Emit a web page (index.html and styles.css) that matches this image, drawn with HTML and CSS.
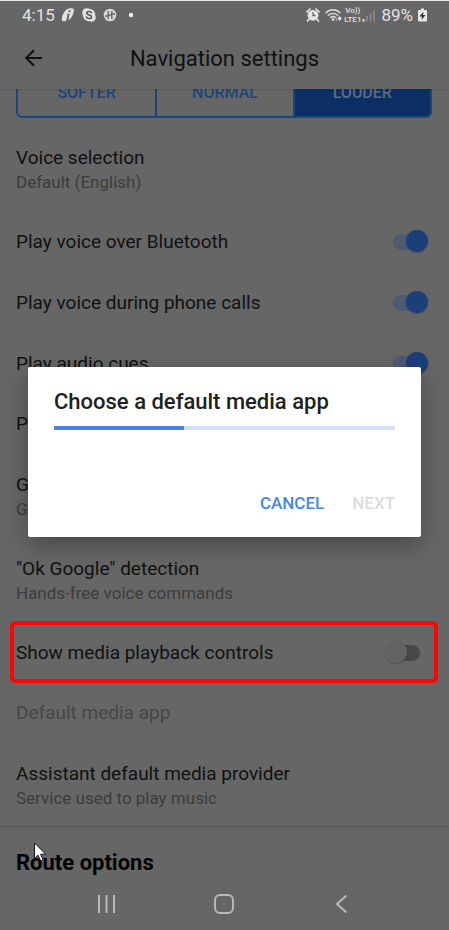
FILE: index.html
```html
<!DOCTYPE html>
<html lang="en">
<head>
<meta charset="utf-8">
<meta name="viewport" content="width=device-width, initial-scale=1">
<title>Navigation settings</title>
<link rel="stylesheet" href="styles.css">
</head>
<body>
<div class="phone">
  <div class="status">
    <span class="status-text">4:15</span>
    <svg class="glyph note" width="14" height="14" viewBox="0 0 14 14"><path d="M7 .8C9 0 12 0 12.800 1.200C13.400 3 12 7 10 10L7.500 12.500L8.600 5.500L5.500 6L6.500 7L5 13C3 13.800.8 13 .8 11.500C.8 7.500 3.500 2.500 7 .8Z" fill="#e2e2e2"/><circle cx="8.600" cy="3.200" r="1.100" fill="#666"/></svg>
    <svg class="glyph" width="14" height="14" viewBox="0 0 14 14"><circle cx="4.500" cy="4.500" r="4.300" fill="#e2e2e2"/><circle cx="9.500" cy="9.500" r="4.300" fill="#e2e2e2"/><circle cx="7" cy="7" r="6.200" fill="#e2e2e2"/><path d="M9.500 4.800C8.800 3 4.700 3 4.700 5.200C4.700 7.500 9.600 6.500 9.600 8.900C9.600 11.200 5 11.100 4.400 9" fill="none" stroke="#555" stroke-width="1.500" stroke-linecap="round"/></svg>
    <svg class="glyph" width="14" height="14" viewBox="0 0 14 14"><circle cx="7" cy="7" r="6.300" fill="#d8d8d8"/><path d="M5.200 3V11M8.800 3V11M2 8H5.200L8.800 6H12" fill="none" stroke="#666" stroke-width="1.400"/></svg>
    <svg class="glyph dot" width="6" height="6" viewBox="0 0 6 6"><circle cx="3" cy="3" r="2.200" fill="#eee"/></svg>
    <span class="spacer"></span>
    <svg width="14" height="14" viewBox="0 0 14 14"><path d="M1 3.800L4 1M13 3.800L10 1M3 11L1.600 13M11 11L12.400 13" stroke="#e4e4e4" stroke-width="1.700" stroke-linecap="round"/><circle cx="7" cy="7.300" r="5.400" fill="#e4e4e4"/><path d="M7 4.300V7.500H9.500" fill="none" stroke="#666" stroke-width="1.300"/></svg>
    <svg class="wifi" width="17" height="14" viewBox="0 0 17 14"><path d="M1 4.800C5 .8 11 .8 15 4.800M3.300 7.300C6 4.700 10 4.700 12.700 7.300M5.600 9.600C7 8.300 9 8.300 10.400 9.600" fill="none" stroke="#dedede" stroke-width="1.400" stroke-linecap="round"/><circle cx="8" cy="11.600" r="1.300" fill="#dedede"/><path d="M11.800 9V13L10.300 11.500" stroke="#aaa" fill="none"/><path d="M14.500 8L16.800 10.500L14.500 13L12.800 10.500Z" fill="#e4e4e4"/></svg>
    <span class="lte"><span>Vo))</span><span>LTE1</span></span>
    <svg class="signal" width="13" height="13" viewBox="0 0 13 13"><path d="M1.500 10V12.500" stroke="#e4e4e4" stroke-width="2"/><path d="M5 7V12.500M8.500 4V12.500M12 1V12.500" stroke="#8d8d8d" stroke-width="1.600"/></svg>
    <span class="status-text percent">89%</span>
    <svg class="battery" width="9" height="14" viewBox="0 0 9 14"><path d="M3 .5H6V2H8Q9 2 9 3V12.500Q9 13.500 8 13.500H1Q0 13.500 0 12.500V3Q0 2 1 2H3Z" fill="#e8e8e8"/><path d="M5.500 3.500L1.500 8.500H4L3.500 12L7.500 7H5Z" fill="#333"/></svg>
  </div>
  <header class="appbar">
    <button class="back" aria-label="Back"><svg width="20" height="20" viewBox="0 0 20 20"><path d="M18 10H2.500M10 2.200L2.200 10L10 17.800" fill="none" stroke="#111" stroke-width="2"/></svg></button>
    <h1>Navigation settings</h1>
  </header>
  <main>
    <div class="segment-view">
      <div class="segments">
        <button>SOFTER</button><button>NORMAL</button><button class="selected">LOUDER</button>
      </div>
    </div>
    <section class="row"><h2>Voice selection</h2><p>Default (English)</p></section>
    <label class="row toggle"><span>Play voice over Bluetooth</span><input type="checkbox" checked></label>
    <label class="row toggle"><span>Play voice during phone calls</span><input type="checkbox" checked></label>
    <label class="row toggle"><span>Play audio cues</span><input type="checkbox" checked></label>
    <section class="row"><h2>P</h2></section>
    <section class="row"><h2>G</h2><p>G</p></section>
    <section class="row"><h2>"Ok Google" detection</h2><p>Hands-free voice commands</p></section>
    <label class="row toggle marked"><span>Show media playback controls</span><input type="checkbox"></label>
    <section class="row disabled"><h2>Default media app</h2></section>
    <section class="row group-end"><h2>Assistant default media provider</h2><p>Service used to play music</p></section>
    <div class="route"><h2>Route options</h2>
      <svg class="pointer" width="13" height="20" viewBox="0 0 13 20"><path d="M.5 1V16.500L4 13.200L6.700 19L9.200 17.900L6.600 12.200H11.700Z" fill="#fff" stroke="#111827"/></svg>
    </div>
  </main>
  <nav class="navbar">
    <button aria-label="Recent apps"><svg width="20" height="20" viewBox="0 0 20 20"><path d="M2 1V19M9.500 1V19M17 1V19" stroke="#b8b8b8" stroke-width="2"/></svg></button>
    <button aria-label="Home"><svg width="20" height="20" viewBox="0 0 20 20"><rect x="1" y="1" width="18" height="18" rx="5" fill="none" stroke="#b8b8b8" stroke-width="2"/></svg></button>
    <button aria-label="Back"><svg width="20" height="20" viewBox="0 0 20 20"><path d="M14.500 1.500L5 10L14.500 18.500" fill="none" stroke="#b8b8b8" stroke-width="2"/></svg></button>
  </nav>
  <div class="overlay">
    <div class="dialog" role="dialog" aria-labelledby="dialog-title">
      <h2 id="dialog-title">Choose a default media app</h2>
      <progress value="38" max="100" aria-labelledby="dialog-title"></progress>
      <div class="actions"><button>CANCEL</button><button disabled>NEXT</button></div>
    </div>
  </div>
</div>
</body>
</html>
```
FILE: styles.css
```css
* { box-sizing: border-box; }
body { margin: 0; background: #666; color: #111; font-family: Roboto, "Liberation Sans", sans-serif; }
h1, h2, p { margin: 0; font-weight: 400; }
button { padding: 0; border: 0; background: none; font: inherit; color: inherit; }
svg { display: block; flex: none; }

.phone { position: relative; display: flex; flex-direction: column; min-height: 100vh; border-top: 1px solid #e8e8e8; }

.status { display: flex; align-items: center; height: 28px; padding: 0 22px; color: #e2e2e2; }
.status-text { font-size: 17px; }
.glyph { margin-left: 7px; }
.note { margin-left: 6px; }
.dot { margin-left: 11px; }
.spacer { flex: 1; }
.wifi { margin-left: 5px; }
.lte { display: flex; flex-direction: column; align-items: center; margin-left: 2px; font-size: 8px; line-height: 9px; font-weight: 500; }
.signal { margin-left: 1px; }
.percent { margin: 0 5px 0 6px; }

.appbar { position: relative; display: grid; place-items: center; height: 60px; box-shadow: 0 1px 2px rgba(0, 0, 0, .12); }
.appbar h1 { font-size: 22px; line-height: 28px; }
.back { position: absolute; left: 24px; top: 19px; }

.segment-view { padding: 0 17px 10px 16px; overflow: hidden; }
.segments { display: grid; grid-template-columns: repeat(3, 1fr); height: 51px; margin-top: -22px; border: 2px solid #1c4580; border-radius: 6px; overflow: hidden; color: #1c4580; font-size: 16px; font-weight: 500; }
.segments button + button { border-left: 2px solid #1c4580; }
.segments .selected { background: #0b2f64; color: #5d6b80; }

.row { display: block; padding: 18px 21px 17px 16px; font-size: 19px; line-height: 24px; }
.row h2 { font-size: 19px; }
.row p { font-size: 17px; color: #3c3c3c; }
.row p:last-child { padding-bottom: 1px; }
.row h2:last-child { padding-bottom: 2px; }
.row.group-end { padding-bottom: 15px; }
.toggle { position: relative; display: flex; align-items: center; justify-content: space-between; height: 60px; padding-top: 17px; }
.toggle + .toggle { height: 61px; padding-top: 18px; }
.disabled { color: #474747; }

.toggle input { appearance: none; position: relative; width: 43px; height: 24px; margin: 0; flex: none; }
.toggle input::before { content: ""; position: absolute; inset: 4px 8px; border-radius: 8px; background: #484848; }
.toggle input::after { content: ""; position: absolute; left: 0; top: 0; width: 22px; height: 22px; border-radius: 50%; background: #636363; box-shadow: 0 1px 2px rgba(0, 0, 0, .2); }
.toggle input:checked::before { background: #4f5b73; }
.toggle input:checked::after { left: auto; right: 0; background: #1b3f7b; }
.marked::after { content: ""; position: absolute; inset: -2px 11px 0 10px; border: 4px solid #f90606; border-radius: 5px; }

.route { position: relative; border-top: 1px solid #535353; padding: 22px 16px 0; color: #000; }
.route h2 { font-size: 22px; line-height: 28px; font-weight: 700; }
.pointer { position: absolute; left: 34px; top: 15px; }

.navbar { display: grid; grid-template-columns: repeat(3, 1fr); padding: 0 48px; height: 53px; margin-top: auto; }
.navbar button { display: grid; place-items: center; }

.overlay { position: absolute; inset: 29px 0 56px; display: flex; align-items: center; padding: 0 28px; }
.dialog { flex: 1; padding: 20px 26px 16px; border-radius: 2px; background: #fff; box-shadow: 0 8px 24px rgba(0, 0, 0, .3); }
.dialog h2 { font-size: 22px; line-height: 30px; font-weight: 500; color: #212121; }
.dialog progress { appearance: none; display: block; width: 100%; height: 4px; margin-top: 9px; border: 0; }
.dialog progress::-webkit-progress-bar { background: #cfdff6; }
.dialog progress::-webkit-progress-value { background: #4a83e1; }
.actions { display: flex; justify-content: flex-end; gap: 28px; margin-top: 55px; font-size: 17px; line-height: 36px; font-weight: 500; color: #4285f4; }
.actions button:disabled { color: #dcdcdc; }
```
